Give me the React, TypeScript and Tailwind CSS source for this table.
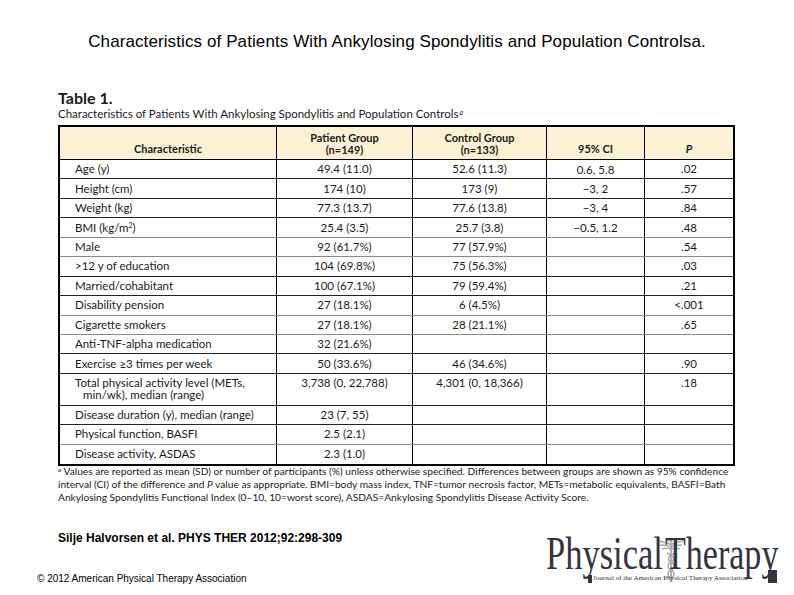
const rows = [
  { c: "Age (y)", p: "49.4 (11.0)", g: "52.6 (11.3)", ci: "0.6, 5.8", pv: ".02" },
  { c: "Height (cm)", p: "174 (10)", g: "173 (9)", ci: "\u22123, 2", pv: ".57" },
  { c: "Weight (kg)", p: "77.3 (13.7)", g: "77.6 (13.8)", ci: "\u22123, 4", pv: ".84" },
  { c: "BMI", p: "25.4 (3.5)", g: "25.7 (3.8)", ci: "\u22120.5, 1.2", pv: ".48", gray: true },
  { c: "Male", p: "92 (61.7%)", g: "77 (57.9%)", ci: "", pv: ".54", gray: true },
  { c: ">12 y of education", p: "104 (69.8%)", g: "75 (56.3%)", ci: "", pv: ".03" },
  { c: "Married/cohabitant", p: "100 (67.1%)", g: "79 (59.4%)", ci: "", pv: ".21" },
  { c: "Disability pension", p: "27 (18.1%)", g: "6 (4.5%)", ci: "", pv: "<.001", gray: true },
  { c: "Cigarette smokers", p: "27 (18.1%)", g: "28 (21.1%)", ci: "", pv: ".65", gray: true },
  { c: "Anti-TNF-alpha medication", p: "32 (21.6%)", g: "", ci: "", pv: "" },
  { c: "Exercise \u22653 times per week", p: "50 (33.6%)", g: "46 (34.6%)", ci: "", pv: ".90" },
  { c: "Total physical activity level (METs,", c2: "min/wk), median (range)", p: "3,738 (0, 22,788)", g: "4,301 (0, 18,366)", ci: "", pv: ".18" },
  { c: "Disease duration (y), median (range)", p: "23 (7, 55)", g: "", ci: "", pv: "" },
  { c: "Physical function, BASFI", p: "2.5 (2.1)", g: "", ci: "", pv: "", gray: true },
  { c: "Disease activity, ASDAS", p: "2.3 (1.0)", g: "", ci: "", pv: "", last: true },
];

function Caduceus() {
  return (
    <svg width="26" height="46" viewBox="0 0 26 46" fill="none" stroke="#a9a9b0" strokeWidth="1.4">
      <line x1="13" y1="3" x2="13" y2="45" strokeWidth="1.8" />
      <circle cx="13" cy="3" r="2" fill="#a9a9b0" stroke="none" />
      <path d="M13 8 C9 5 4 5 1 4 M13 10 C9 8 5 8 2 8 M13 12 C10 11 6 11 4 12" />
      <path d="M13 8 C17 5 22 5 25 4 M13 10 C17 8 21 8 24 8 M13 12 C16 11 20 11 22 12" />
      <path d="M9 16 C17 19 17 23 13 25 C9 27 9 31 13 33 C17 35 17 39 13 41" />
      <path d="M17 16 C9 19 9 23 13 25 C17 27 17 31 13 33 C9 35 9 39 13 41" />
    </svg>
  );
}

export default function App() {
  return (
    <div className="w-[794px] h-[595px] bg-white overflow-hidden text-[#1a1a1a]">
      <div className="mt-[33px] h-[18px] leading-[18px] text-center text-[17px] tracking-[0.1px] font-['Liberation_Sans',Arial,sans-serif] text-black">
        Characteristics of Patients With Ankylosing Spondylitis and Population Controlsa.
      </div>

      <div className="ml-[58px] w-[677px] font-['Lato','Open_Sans',sans-serif]">
        <div className="mt-[38px] h-[18px] leading-[18px] text-[16px] font-bold">Table 1.</div>
        <div className="h-[13px] leading-[13px] text-[11.5px]">
          Characteristics of Patients With Ankylosing Spondylitis and Population Controls
          <sup className="italic text-[7px] ml-px">a</sup>
        </div>

        {/* table */}
        <div className="mt-[5px] border-2 border-black text-[11.5px]">
          <div className="flex h-[33px] bg-[#fcf2d3] border-b border-black font-bold text-[11px] leading-[12px] text-center">
            <div className="w-[217px] border-r border-black flex items-end justify-center pb-[4px]">Characteristic</div>
            <div className="w-[136px] border-r border-black flex flex-col items-center pt-[5px]">
              <span>Patient Group</span>
              <span>(n=149)</span>
            </div>
            <div className="w-[134px] border-r border-black flex flex-col items-center pt-[5px]">
              <span>Control Group</span>
              <span>(n=133)</span>
            </div>
            <div className="w-[98px] border-r border-black flex items-end justify-center pb-[4px]">95% CI</div>
            <div className="flex-1 flex items-end justify-center pb-[4px] italic">P</div>
          </div>

          {rows.map((r) => (
            <div
              key={r.c}
              className={
                "flex " +
                (r.c2 ? "h-[32px] " : "h-[19.45px] ") +
                (r.last ? "" : r.gray ? "border-b-[1.5px] border-[#8a8a8a]" : "border-b border-[#222]")
              }
            >
              <div className={"w-[217px] border-r border-black pl-[15px] leading-[12px] " + (r.c2 ? "pt-[3px]" : "flex items-center")}>
                {r.c2 ? (
                  <div>
                    <div>{r.c}</div>
                    <div className="pl-[8px]">{r.c2}</div>
                  </div>
                ) : r.c === "BMI" ? (
                  <span>
                    BMI (kg/m<sup className="text-[7px]">2</sup>)
                  </span>
                ) : (
                  r.c
                )}
              </div>
              <div className={"w-[136px] border-r border-black flex justify-center leading-[12px] " + (r.c2 ? "items-start pt-[3px]" : "items-center")}>{r.p}</div>
              <div className={"w-[134px] border-r border-black flex justify-center leading-[12px] " + (r.c2 ? "items-start pt-[3px]" : "items-center")}>{r.g}</div>
              <div className="w-[98px] border-r border-black flex items-center justify-center">{r.ci}</div>
              <div className={"flex-1 flex justify-center leading-[12px] " + (r.c2 ? "items-start pt-[3px]" : "items-center")}>{r.pv}</div>
            </div>
          ))}
        </div>

        <div className="-mt-[1px] text-[10.2px] leading-[13px] whitespace-nowrap">
          <div className="h-[13px]">
            <sup className="italic text-[6.5px]">a</sup> Values are reported as mean (SD) or number of participants (%) unless otherwise specified. Differences between groups are shown as 95% confidence
          </div>
          <div className="h-[13px]">
            interval (CI) of the difference and <span className="italic">P</span> value as appropriate. BMI=body mass index, TNF=tumor necrosis factor, METs=metabolic equivalents, BASFI=Bath
          </div>
          <div className="h-[13px]">
            Ankylosing Spondylitis Functional Index (0–10, 10=worst score), ASDAS=Ankylosing Spondylitis Disease Activity Score.
          </div>
        </div>
      </div>

      {/* bottom */}
      <div className="flex justify-between mt-[27px]">
        <div className="font-['Liberation_Sans',Arial,sans-serif] text-black">
          <div className="ml-[58px] h-[15px] leading-[15px] text-[12px] font-bold">
            Silje Halvorsen et al. PHYS THER 2012;92:298-309
          </div>
          <div className="ml-[37px] mt-[27px] h-[12px] text-[10px] leading-[12px]">© 2012 American Physical Therapy Association</div>
        </div>

        <div className="mr-[16px] mt-[6px] w-[232px] flex flex-col text-[#34343f]">
          <div className="flex items-start h-[34px]">
            <div className="w-[116px] h-[34px] overflow-visible">
              <span className="inline-block origin-left scale-x-[0.75] text-[46px] leading-[34px] font-['Liberation_Serif',serif] whitespace-nowrap">
                Physical
              </span>
            </div>
            <div className="w-[8px] -ml-[4px] overflow-visible">
              <Caduceus />
            </div>
            <div className="w-[110px] h-[34px] -ml-[1px] overflow-visible">
              <span className="inline-block origin-left scale-x-[0.74] text-[46px] leading-[34px] font-['Liberation_Serif',serif] whitespace-nowrap">
                Therapy
              </span>
            </div>
          </div>
          <div className="flex items-end h-[12px] ml-[42px]">
            <div className="w-[4px] h-[8px] bg-[#34343f]" />
            <div className="w-[176px] h-[12px] pl-[1px] flex items-end overflow-visible">
              <span className="inline-block text-[7.1px] leading-[10px] font-['Liberation_Serif',serif] whitespace-nowrap">
                Journal of the American Physical Therapy Association
              </span>
            </div>
            <div className="w-[9px] h-[13px] bg-[#34343f]" />
          </div>
        </div>
      </div>
    </div>
  );
}
